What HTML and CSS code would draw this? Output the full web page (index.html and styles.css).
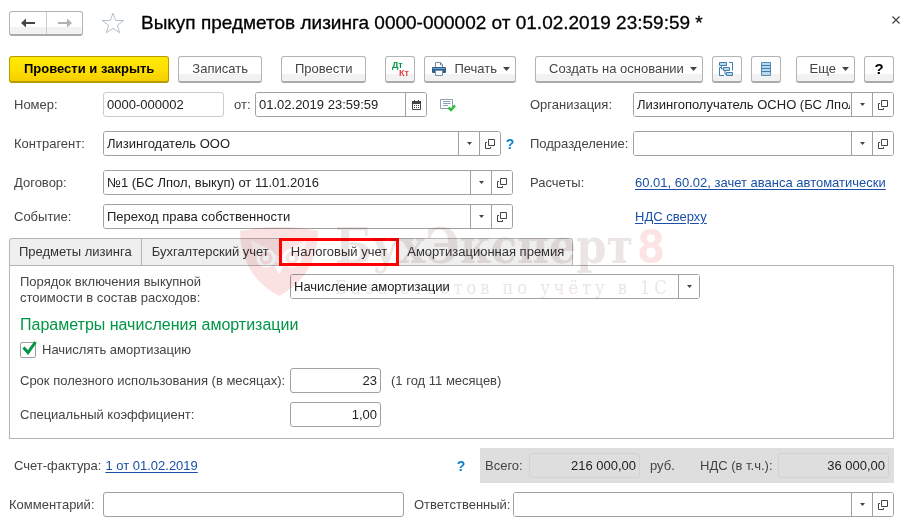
FILE: index.html
```
<!DOCTYPE html>
<html lang="ru">
<head>
<meta charset="utf-8">
<title>Выкуп предметов лизинга</title>
<link rel="stylesheet" href="styles.css">
</head>
<body>
<svg class="defs" aria-hidden="true">
  <symbol id="down" viewBox="0 0 7 4"><path d="M1 0h5v1H1zM0 0h7L3.500 4z" fill="#444"/></symbol>
  <symbol id="open" viewBox="0 0 10 10"><path d="M3.500 0.500h6v6h-6zM2 3.500H0.500v6h5V8" fill="none" stroke="#444"/></symbol>
</svg>
<main class="window">
  <header class="titlebar">
    <div class="history">
      <button aria-label="Назад"><svg width="14" height="10" viewBox="0 0 14 10"><path d="M14 4v2H5v3.500L0 5 5 .5V4z" fill="#444"/></svg></button>
      <button aria-label="Вперед"><svg width="14" height="10" viewBox="0 0 14 10"><path d="M0 4v2h9v3.500L14 5 9 .5V4z" fill="#b0b0b0"/></svg></button>
    </div>
    <button class="bare star" aria-label="В избранное"><svg width="24" height="22" viewBox="0 0 24 22"><path d="M12 1.200l2.700 7.300h8l-6.300 4.700 2.300 7.600L12 16.300l-6.700 4.500 2.300-7.600L1.300 8.500h8z" fill="#fff" stroke="#b3bfca"/></svg></button>
    <h1>Выкуп предметов лизинга 0000-000002 от 01.02.2019 23:59:59 *</h1>
    <button class="bare close" aria-label="Закрыть"><svg width="8" height="8" viewBox="0 0 8 8"><path d="M.5.5l7 7M7.500.5l-7 7" stroke="#444" stroke-width="1.200" fill="none"/></svg></button>
  </header>

  <div class="toolbar">
    <div class="group">
      <button class="btn primary">Провести и закрыть</button>
      <button class="btn">Записать</button>
    </div>
    <button class="btn">Провести</button>
    <div class="group">
      <button class="btn icon" aria-label="Дт Кт"><span class="dtkt"><span class="dt">Дт</span><span class="kt">Кт</span></span></button>
      <button class="btn menu print"><svg width="14" height="14" viewBox="0 0 14 14"><path d="M3.500 6V.5h5l2 2V6" fill="#fff" stroke="#7890a5"/><path d="M8.500 0v3h2.500" fill="none" stroke="#7890a5"/><rect y="5" width="14" height="6" rx="1" fill="#2d5f8c"/><path d="M1 6.500h12" stroke="#6fa0c8"/><path d="M3.500 8.500h7v5h-7z" fill="#fff" stroke="#7890a5"/></svg>Печать<svg class="down" width="7" height="4"><use href="#down"/></svg></button>
    </div>
    <div class="group">
      <button class="btn menu">Создать на основании<svg class="down" width="7" height="4"><use href="#down"/></svg></button>
      <button class="btn icon" aria-label="Структура подчиненности"><svg width="15" height="15" viewBox="0 0 15 15"><g fill="#b9d7ea" stroke="#3f7fae"><path d="M.5.5h7v3h-7zM4.500 5.500h6v3h-6zM7.500 10.500h6v3h-6z"/><path d="M10 .5h3.500v8M3 5.500H.5v8H5M2.500 4v3H4M6 9v3h1.500" fill="none"/></g></svg></button>
      <button class="btn icon" aria-label="Список"><svg width="10" height="14" viewBox="0 0 10 14"><path d="M.5.5h9v13h-9z" fill="#b9d7ea" stroke="#5b8db2"/><path d="M0 3.500h10M0 6.500h10M0 9.500h10" stroke="#3f7fae"/></svg></button>
    </div>
    <div class="group end">
      <button class="btn menu">Еще<svg class="down" width="7" height="4"><use href="#down"/></svg></button>
      <button class="btn icon help">?</button>
    </div>
  </div>

  <div class="details">
    <div class="row">
      <label class="name" for="num">Номер:</label>
      <input class="field number" id="num" value="0000-000002" readonly>
      <label class="from" for="date">от:</label>
      <div class="combo date"><input id="date" value="01.02.2019 23:59:59"><button aria-label="Календарь"><svg width="9" height="10" viewBox="0 0 9 10"><path d="M.5 1.500h8v8h-8z" fill="#fff" stroke="#444"/><path d="M0 1h9v3H0zM2 0h1v2H2zM6 0h1v2H6z" fill="#444"/><path d="M2 5.500h5M2 7.500h5" stroke="#444" stroke-dasharray="1 1"/></svg></button></div>
      <svg class="posted" width="16" height="13" viewBox="0 0 16 13"><path d="M.5.500h12v9H.5z" fill="#fff" stroke="#8ba0b4"/><path d="M3 2.500h7.500M3 4.500h7.500M3 6.500h5" stroke="#8ba0b4"/><path d="M8.500 8.500l2.500 2.500L15 6.500" fill="none" stroke="#2dbb3c" stroke-width="2.500"/></svg>
    </div>
    <div class="row">
      <label class="name" for="org">Организация:</label>
      <div class="combo"><select id="org"><option>Лизингополучатель ОСНО (БС Лпол, выкуп)</option></select><span class="arrow"><svg width="5" height="3"><use href="#down"/></svg></span><button aria-label="Открыть"><svg width="10" height="10"><use href="#open"/></svg></button></div>
    </div>
    <div class="row">
      <label class="name" for="agent">Контрагент:</label>
      <div class="combo"><select id="agent"><option>Лизингодатель ООО</option></select><span class="arrow"><svg width="5" height="3"><use href="#down"/></svg></span><button aria-label="Открыть"><svg width="10" height="10"><use href="#open"/></svg></button></div>
      <button class="bare hint">?</button>
    </div>
    <div class="row">
      <label class="name" for="dept">Подразделение:</label>
      <div class="combo"><select id="dept"><option></option></select><span class="arrow"><svg width="5" height="3"><use href="#down"/></svg></span><button aria-label="Открыть"><svg width="10" height="10"><use href="#open"/></svg></button></div>
    </div>
    <div class="row">
      <label class="name" for="contract">Договор:</label>
      <div class="combo"><select id="contract"><option>№1 (БС Лпол, выкуп) от 11.01.2016</option></select><span class="arrow"><svg width="5" height="3"><use href="#down"/></svg></span><button aria-label="Открыть"><svg width="10" height="10"><use href="#open"/></svg></button></div>
    </div>
    <div class="row">
      <span class="name">Расчеты:</span>
      <a href="#">60.01, 60.02, зачет аванса автоматически</a>
    </div>
    <div class="row">
      <label class="name" for="event">Событие:</label>
      <div class="combo"><select id="event"><option>Переход права собственности</option></select><span class="arrow"><svg width="5" height="3"><use href="#down"/></svg></span><button aria-label="Открыть"><svg width="10" height="10"><use href="#open"/></svg></button></div>
    </div>
    <div class="row">
      <span class="name"></span>
      <a href="#">НДС сверху</a>
    </div>
  </div>

  <section class="pages">
    <div class="tabs" role="tablist">
      <button role="tab">Предметы лизинга</button>
      <button role="tab">Бухгалтерский учет</button>
      <button role="tab" class="active" aria-selected="true">Налоговый учет</button>
      <button role="tab">Амортизационная премия</button>
    </div>
    <div class="panel">
      <div class="row order">
        <label class="name" for="order">Порядок включения выкупной стоимости в состав расходов:</label>
        <div class="combo single"><select id="order"><option>Начисление амортизации</option></select><span class="arrow"><svg width="5" height="3"><use href="#down"/></svg></span></div>
      </div>
      <h2>Параметры начисления амортизации</h2>
      <label class="check"><input type="checkbox" checked><svg class="tick" width="15" height="14" viewBox="0 0 15 14"><path d="M1.500 6.500l4.500 5L13.500 1" fill="none" stroke="#009646" stroke-width="3"/></svg>Начислять амортизацию</label>
      <div class="row">
        <label class="name" for="term">Срок полезного использования (в месяцах):</label>
        <input class="field amount" id="term" value="23">
        <span class="note">(1 год 11 месяцев)</span>
      </div>
      <div class="row">
        <label class="name" for="coef">Специальный коэффициент:</label>
        <input class="field amount" id="coef" value="1,00">
      </div>
    </div>
    <div class="watermark" aria-hidden="true">
      <svg width="78" height="70" viewBox="0 0 78 70"><path d="M0 4Q39-4 78 4Q77 49 39 69Q1 49 0 4z" fill="#fbe2e2"/><path d="M11 13l16 8 12 9 12-9 16-8-3 13-9 2-16 9-16-9-9-2z" fill="#fff" opacity=".6"/><g fill="#fbe2e2" stroke="#fff" stroke-width="3"><circle cx="26" cy="31" r="8"/><circle cx="52" cy="31" r="8"/></g><path d="M34 38h10l-5 9z" fill="#fff"/><circle cx="26" cy="31" r="3" fill="#fff"/><circle cx="52" cy="31" r="3" fill="#fff"/></svg>
      <div class="brand"><div class="brand-name">БухЭксперт<span>8</span></div><div class="slogan">База ответов по учёту в 1С</div></div>
    </div>
  </section>

  <div class="summary">
    <div class="invoice"><span>Счет-фактура:</span><a href="#">1 от 01.02.2019</a><button class="bare hint">?</button></div>
    <div class="totals">
      <label for="total">Всего:</label><input class="field" id="total" value="216 000,00" readonly>
      <span class="unit">руб.</span>
      <label for="vat">НДС (в т.ч.):</label><input class="field" id="vat" value="36 000,00" readonly>
    </div>
  </div>

  <footer class="bottom">
    <div class="row"><label class="name" for="comment">Комментарий:</label><input class="field" id="comment"></div>
    <div class="row"><label class="name" for="resp">Ответственный:</label>
      <div class="combo"><select id="resp"><option></option></select><span class="arrow"><svg width="5" height="3"><use href="#down"/></svg></span><button aria-label="Открыть"><svg width="10" height="10"><use href="#open"/></svg></button></div>
    </div>
  </footer>
</main>
</body>
</html>
```
FILE: styles.css
```
* { box-sizing: border-box; }
body { margin: 0; background: #fff; color: #444; font: 13px/16px "Liberation Sans", Arial, sans-serif; }
button, input, select { font: inherit; color: #222; margin: 0; }
svg { display: block; flex: none; }
a { color: #1a50a8; text-underline-offset: 2px; }
.defs { position: absolute; width: 0; height: 0; }
.window { padding: 10px 10px 5px 9px; }

.titlebar { display: flex; align-items: center; height: 26px; }
.history { display: flex; height: 25px; border: 1px solid #b4b4b4; border-bottom: 2px solid #aaa; border-radius: 3px; background: linear-gradient(#fff 70%, #f2f2f2 70%); }
.history button { width: 36px; padding: 0; border: 0; background: none; display: grid; place-items: center; }
.history button + button { border-left: 1px solid #ccc; }
.bare { padding: 0; border: 0; background: none; }
.star { margin: 0 16px 0 18px; }
h1 { flex: 1; margin: 0; color: #000; font-size: 19px; line-height: 26px; font-weight: 400; white-space: nowrap; -webkit-text-stroke: 0.300px #000; }
.close { align-self: flex-start; margin: 6px -6px 0 0; }

.toolbar { display: flex; gap: 11px; margin-top: 20px; }
.toolbar > * + *:not(.end) { margin-left: 8px; }
.group { display: flex; gap: 9px; }
.toolbar > .end { margin-left: auto; }
.btn { display: flex; align-items: center; justify-content: center; height: 27px; padding: 0 13px; border: 1px solid #b4b4b4; border-bottom: 2px solid #aaa; border-radius: 3px; background: linear-gradient(#fff 70%, #f2f2f2 70%); color: #444; white-space: nowrap; }
.primary { padding: 0 14px; border-color: #b59a00; background: linear-gradient(#ffe900, #ffe000 50%, #f5cf00); color: #000; font-weight: 700; }
.icon { width: 30px; padding: 0; }
.down { margin-left: 6px; }
.menu { padding-right: 5px; }
.print { padding-left: 7px; }
.print svg:first-child { margin-right: 8px; }
.help { color: #000; font-size: 15px; font-weight: 700; }
.dtkt { display: flex; flex-direction: column; width: 17px; font-size: 9px; line-height: 8px; font-weight: 700; }
.dt { color: #009646; text-align: left; }
.kt { color: #e04040; text-align: right; }

.details { display: grid; grid-template-columns: minmax(0, 504fr) minmax(0, 364fr); column-gap: 17px; margin-top: 9px; }
.row { display: flex; align-items: center; min-height: 25px; }
.details .row { margin-bottom: 9px; }
.details .row:nth-child(-n+4) { margin-bottom: 14px; }
.name { flex: none; }
.details .name { width: 103px; }
.details .row:nth-child(odd) .name { width: 94px; padding-left: 5px; }
.details a { padding-left: 2px; white-space: nowrap; }
.field, .combo { height: 25px; border: 1px solid #a0a0a0; border-radius: 3px; background: #fff; }
.field { min-width: 0; padding: 0 3px; }
.number { width: 121px; border-color: #ccc; }
.from { width: 31px; padding-left: 10px; }
.combo { flex: 1; min-width: 0; display: grid; grid-template-columns: minmax(0, 1fr) 21px 21px; overflow: hidden; }
.combo > * { grid-row: 1; }
.combo input, .combo select { width: 100%; height: 23px; padding: 0 3px; border: 0; background: #fff; appearance: none; }
.combo select { grid-column: 1 / 3; padding-right: 22px; }
.combo button { height: 23px; padding: 0; border: 0; border-left: 1px solid #a0a0a0; background: #fff; display: grid; place-items: center; }
.arrow { grid-column: 2; display: grid; place-items: center; border-left: 1px solid #a0a0a0; background: #fff; pointer-events: none; }
.date { flex: 0 1 172px; grid-template-columns: minmax(0, 1fr) 21px; }
.posted { margin: 2px 0 0 13px; }
.hint { width: 12px; color: #0a80d0; font-size: 14px; font-weight: 700; }
.details .hint { margin-left: 3px; margin-right: -3px; }

.pages { position: relative; }
.tabs { display: flex; }
.tabs button { height: 27px; padding: 0 10px; border: 1px solid #b4b4b4; border-width: 1px 1px 0 0; background: #efefef; color: #333; white-space: nowrap; }
.tabs button:first-child { padding: 0 9px; border-left-width: 1px; border-radius: 3px 0 0 0; }
.tabs button:last-child { padding: 0 8px; border-radius: 0 3px 0 0; }
.tabs .active { height: 28px; margin: 0 0 -1px -1px; padding: 0 9px; border: 3px solid #f00; background: #fff; position: relative; }
.panel { padding: 8px 10px 11px; border: 1px solid #b4b4b4; }
.panel .row { margin-bottom: 9px; }
.panel .row:last-child { margin-bottom: 0; }
.panel .name { width: 270px; }
.panel .order { align-items: flex-start; margin-bottom: 10px; }
.order .name { padding-right: 70px; }
.single { flex: 0 1 410px; grid-template-columns: minmax(0, 1fr) 21px; }
h2 { margin: 0; color: #009646; font-size: 16px; line-height: 18px; font-weight: 400; }
.check { display: flex; align-items: center; height: 16px; margin: 8px 0 10px; }
.check input { appearance: none; width: 16px; height: 16px; margin: 0; border: 1px solid #a0a0a0; border-radius: 2px; }
.tick { margin: -4px 5px 0 -14px; }
.amount { width: 91px; text-align: right; }
.note { margin-left: 10px; }

.watermark { position: absolute; left: 231px; top: -11px; display: flex; mix-blend-mode: multiply; pointer-events: none; }
.brand { margin: -5px 0 0 17px; white-space: nowrap; color: #ebe6e4; }
.brand-name { font: 700 48px/48px "DejaVu Serif Condensed", "DejaVu Serif", serif; }
.brand-name span { margin-left: 4px; color: #fde4e4; font-family: Roboto, sans-serif; }
.slogan { margin-top: 6px; font: 18px/22px "DejaVu Serif Condensed", "DejaVu Serif", serif; letter-spacing: 4px; }

.summary { display: flex; margin-top: 9px; }
.invoice { flex: 1; display: flex; align-items: center; gap: 4px; padding-left: 5px; }
.invoice .hint { margin: 0 13px 0 auto; }
.totals { display: flex; align-items: center; height: 35px; padding: 0 5px; background: #dedede; }
.totals .field { width: 111px; border-color: #d2d2d2; background: #dedede; text-align: right; }
.totals label { width: 44px; }
.totals .unit { width: 60px; padding-left: 10px; }
.totals .unit + label { width: 78px; white-space: nowrap; }

.bottom { display: grid; grid-template-columns: minmax(0, 395fr) minmax(0, 480fr); column-gap: 10px; margin-top: 9px; }
.bottom .name { width: 94px; }
.bottom .row + .row .name { width: 99px; }
.bottom .field { flex: 1; }
```
